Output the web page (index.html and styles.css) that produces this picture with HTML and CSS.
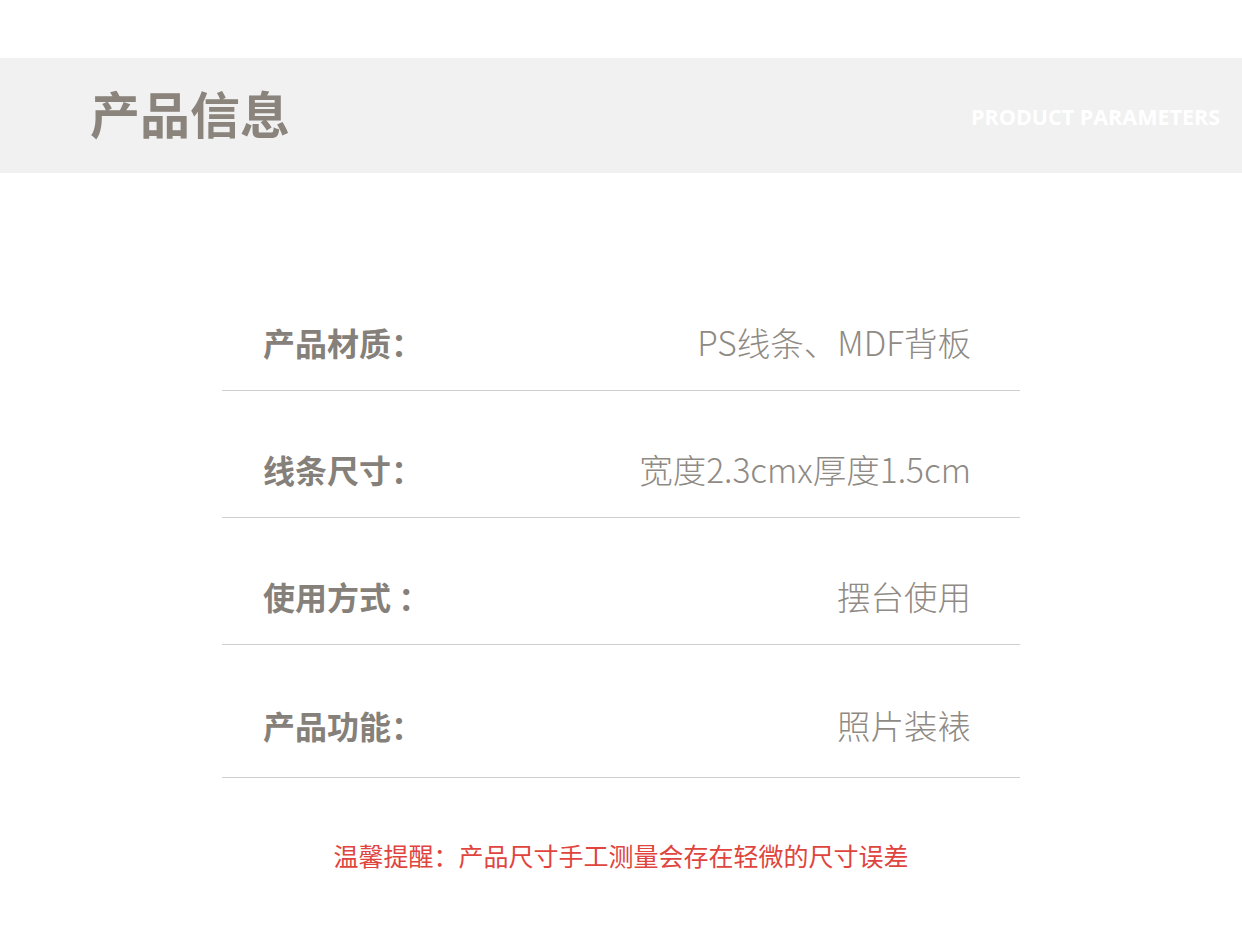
FILE: index.html
```html
<!DOCTYPE html>
<html lang="zh">
<head>
    <meta charset="UTF-8">
    <link rel="stylesheet" href="styles.css">
</head>
<body>

<div class="banner">
    <h1>产品信息</h1>
    <span class="banner-en">PRODUCT PARAMETERS</span>
</div>

<div class="params">
    <div class="row">
        <span class="label">产品材质：</span>
        <span class="value">PS线条、MDF背板</span>
    </div>
    <div class="row">
        <span class="label">线条尺寸：</span>
        <span class="value">宽度2.3cmx厚度1.5cm</span>
    </div>
    <div class="row">
        <span class="label">使用方式 ：</span>
        <span class="value">摆台使用</span>
    </div>
    <div class="row row-last">
        <span class="label">产品功能：</span>
        <span class="value">照片装裱</span>
    </div>
</div>

<p class="note">温馨提醒：产品尺寸手工测量会存在轻微的尺寸误差</p>

</body>
</html>
```

FILE: styles.css
```css
body {
    margin: 0;
    font-family: "Noto Sans CJK SC", "Noto Sans", sans-serif;
    background: #fff;
    color: #8a847c;
}
.banner {
    margin-top: 58px;
    height: 115px;
    background: #f1f1f1;
    display: flex;
    align-items: center;
    justify-content: space-between;
    padding: 0 22px 0 90px;
}
.banner h1 {
    margin: 0 0 8px;
    font-size: 50px;
    font-weight: bold;
    color: #8a847c;
}
.banner-en {
    font-family: "Open Sans", "Noto Sans", sans-serif;
    font-size: 21.5px;
    font-weight: bold;
    color: #fff;
    margin-top: 2px;
}
.params {
    width: 798px;
    margin: 90px auto 0;
}
.row {
    height: 127px;
    box-sizing: border-box;
    border-bottom: 1px solid #cfcfcf;
    display: flex;
    align-items: flex-end;
    justify-content: space-between;
    padding: 0 49px 28px 41px;
}
.row:first-child {
    height: 128px;
}
.row-last {
    height: 133px;
    padding-bottom: 32px;
}
.label {
    font-size: 32px;
    font-weight: bold;
    line-height: 40px;
    color: #858079;
}
.value {
    font-size: 33.5px;
    font-weight: 300;
    line-height: 40px;
    color: #8f8a84;
}
.note {
    margin: 62px 0 0;
    text-align: center;
    font-size: 25px;
    line-height: 30px;
    color: #e0443e;
}
```
